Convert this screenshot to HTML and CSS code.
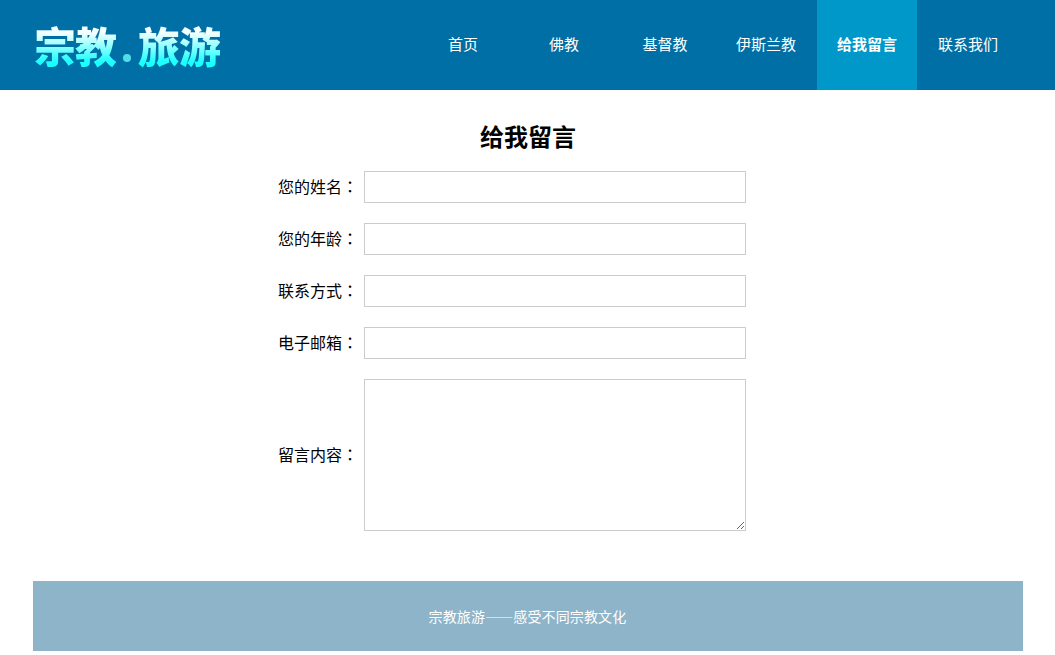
FILE: index.html
```html
<!DOCTYPE html>
<html lang="zh-CN">
<head>
<meta charset="utf-8">
<title>给我留言</title>
<link rel="stylesheet" href="styles.css">
</head>
<body>
<header class="header">
  <div class="logo"><span class="logo-text">宗教</span><span class="logo-dot"></span><span class="logo-text">旅游</span></div>
  <nav class="nav">
    <a class="nav-item">首页</a>
    <a class="nav-item">佛教</a>
    <a class="nav-item">基督教</a>
    <a class="nav-item">伊斯兰教</a>
    <a class="nav-item active">给我留言</a>
    <a class="nav-item">联系我们</a>
  </nav>
</header>
<main class="main">
  <h1 class="title">给我留言</h1>
  <form class="form">
    <label class="row"><span class="label">您的姓名<span class="colon" lang="zh-TW">：</span></span><input class="field" type="text"></label>
    <label class="row"><span class="label">您的年龄<span class="colon" lang="zh-TW">：</span></span><input class="field" type="text"></label>
    <label class="row"><span class="label">联系方式<span class="colon" lang="zh-TW">：</span></span><input class="field" type="text"></label>
    <label class="row"><span class="label">电子邮箱<span class="colon" lang="zh-TW">：</span></span><input class="field" type="text"></label>
    <label class="row"><span class="label">留言内容<span class="colon" lang="zh-TW">：</span></span><textarea class="field area"></textarea></label>
  </form>
</main>
<footer class="footer">宗教旅游——感受不同宗教文化</footer>
</body>
</html>
```
FILE: styles.css
```css
* { box-sizing: border-box; }
html, body { margin: 0; padding: 0; }
body {
  background: #fff;
  color: #000;
  font-family: "Noto Sans CJK SC", "Liberation Sans", sans-serif;
  overflow: hidden;
}
.header {
  height: 90px;
  background: #006fa5;
  display: flex;
  align-items: center;
  justify-content: space-between;
  padding: 0 37px 0 34px;
}
.logo {
  display: flex;
  align-items: center;
  gap: 7px;
  height: 90px;
}
.logo-text {
  font-size: 42px;
  line-height: 48px;
  font-weight: 900;
  letter-spacing: -1px;
  background: linear-gradient(#f4ffff 25%, #1affff 85%);
  -webkit-background-clip: text;
  background-clip: text;
  color: transparent;
}
.logo-dot {
  width: 8px;
  height: 8px;
  margin-top: 26px;
  border-radius: 50%;
  background: #4fdde8;
}
.nav { display: flex; gap: 1px; }
.nav-item {
  width: 100px;
  height: 90px;
  line-height: 88px;
  text-align: center;
  color: #fff;
  font-size: 15px;
}
.nav-item.active {
  background: #0097c9;
  font-weight: 700;
}
.main { padding-top: 28px; }
.title {
  margin: 0 0 17px;
  padding-left: 1px;
  font-size: 24px;
  line-height: 36px;
  font-weight: 700;
  text-align: center;
}
.form {
  display: flex;
  flex-direction: column;
  gap: 20px;
  padding-left: 278px;
}
.row {
  display: flex;
  align-items: center;
  gap: 6px;
}
.label {
  width: 80px;
  padding-bottom: 2px;
  font-size: 16px;
  white-space: nowrap;
}
.colon {
  font-family: "Noto Sans CJK TC", sans-serif;
}
.field {
  width: 382px;
  height: 32px;
  border: 1px solid #ccc;
  background: #fff;
  margin: 0;
  padding: 0;
  outline: none;
  font: inherit;
}
.area {
  height: 152px;
  display: block;
}
.footer {
  width: 990px;
  height: 70px;
  margin: 50px auto 0;
  background: #8db4c9;
  color: #fff;
  font-size: 14px;
  letter-spacing: 0.14px;
  line-height: 70px;
  text-align: center;
}
```
